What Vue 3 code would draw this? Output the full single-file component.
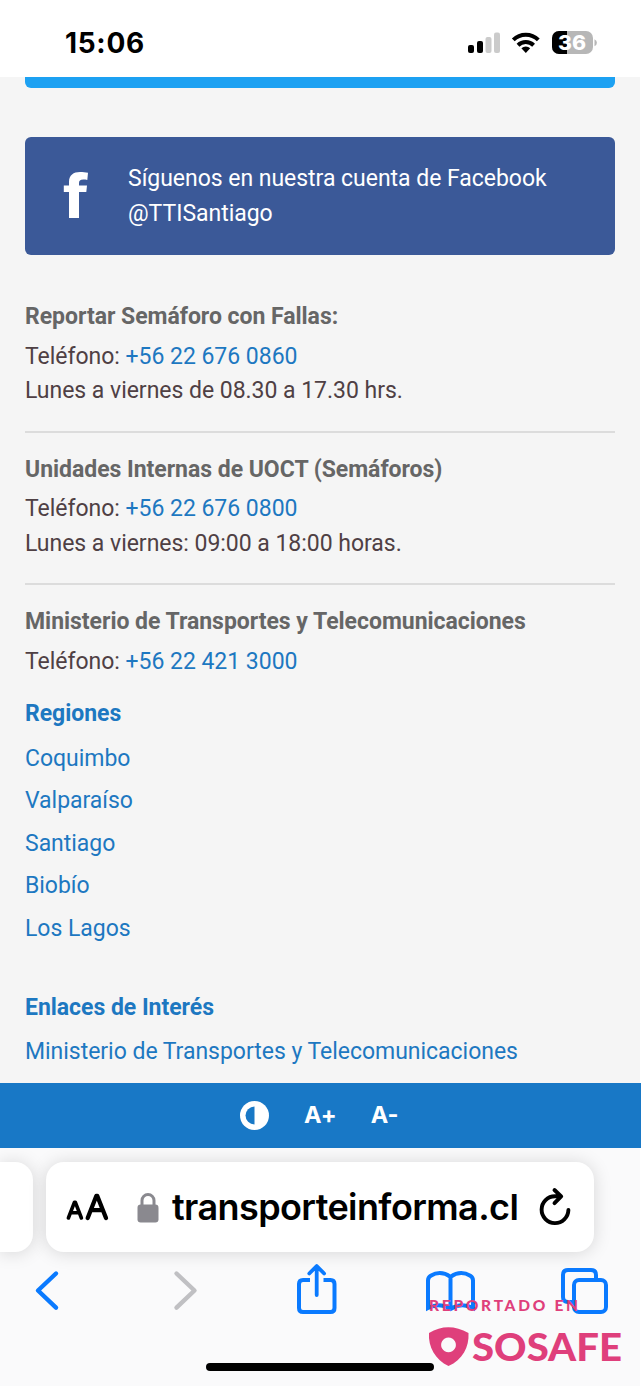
<script setup>
const contacts = [
  { title: 'Reportar Semáforo con Fallas:', phone: '+56 22 676 0860', hours: 'Lunes a viernes de 08.30 a 17.30 hrs.' },
  { title: 'Unidades Internas de UOCT (Semáforos)', phone: '+56 22 676 0800', hours: 'Lunes a viernes: 09:00 a 18:00 horas.' },
  { title: 'Ministerio de Transportes y Telecomunicaciones', phone: '+56 22 421 3000' },
]
const regions = ['Coquimbo', 'Valparaíso', 'Santiago', 'Biobío', 'Los Lagos']
</script>

<template>
  <div class="screen">
    <header class="status">
      <span class="time">15:06</span>
      <svg class="indicators" width="130" height="26" viewBox="0 0 130 26">
        <rect x="0" y="15" width="6" height="8" rx="2" />
        <rect x="9" y="11" width="6" height="12" rx="2" />
        <rect x="17.500" y="7" width="6" height="16" rx="2" fill="#cbcbcb" />
        <rect x="26" y="2.500" width="6" height="20.500" rx="2" fill="#cbcbcb" />
        <g fill="none" stroke="#000" stroke-width="4">
          <path d="M45.300 9.800a17.800 17.800 0 0 1 25 0" />
          <path d="M50 15.200a11.200 11.200 0 0 1 15.600 0" />
        </g>
        <path d="M53.400 18.200a6.300 6.300 0 0 1 8.800 0l-4.400 4.800z" />
        <clipPath id="cell"><rect x="84" y="1" width="41" height="23" rx="7" /></clipPath>
        <g clip-path="url(#cell)">
          <rect x="84" y="1" width="41" height="23" fill="#b7b7b7" />
          <rect x="84" y="1" width="15" height="23" />
        </g>
        <path d="M126.500 9.200q2.400 1 2.400 3.500t-2.400 3.500z" fill="#b7b7b7" />
        <text x="90" y="19.700" textLength="28" lengthAdjust="spacingAndGlyphs" class="charge">36</text>
      </svg>
    </header>

    <main class="page">
      <div class="twitter"></div>
      <a class="facebook">
        <svg width="27" height="48" viewBox="0 0 27 48" fill="#fff">
          <path d="M6 46V20H.8v-6.500H6V10C6 3.200 10.500 0 17 0c3 0 5.300.2 8 .7l-.7 7.200c-1.400-.3-2.500-.4-4-.4-3.200 0-4.300 1.200-4.300 3.500v2.500h8l-.7 6.500H16V46z" />
        </svg>
        <p>Síguenos en nuestra cuenta de Facebook<br />@TTISantiago</p>
      </a>

      <section class="contacts">
        <article v-for="c in contacts" :key="c.title">
          <h3>{{ c.title }}</h3>
          <p>Teléfono: <a>{{ c.phone }}</a></p>
          <p v-if="c.hours">{{ c.hours }}</p>
        </article>
      </section>

      <nav class="links">
        <h4>Regiones</h4>
        <a v-for="r in regions" :key="r">{{ r }}</a>
      </nav>
      <nav class="links more">
        <h4>Enlaces de Interés</h4>
        <a>Ministerio de Transportes y Telecomunicaciones</a>
      </nav>
    </main>

    <div class="access">
      <svg width="29" height="29" viewBox="0 0 29 29">
        <circle cx="14.500" cy="14.500" r="14.500" fill="#fff" />
        <path d="M14.500 5.500a9 9 0 0 0 0 18z" fill="#1878c6" />
      </svg>
      <b>A+</b>
      <b>A-</b>
    </div>

    <footer class="browser">
      <div class="tabs">
        <div class="prev"></div>
        <div class="address">
          <svg class="aa" width="44" height="30" viewBox="0 0 44 30" fill="none" stroke="#000" stroke-linecap="round" stroke-linejoin="round">
            <path d="M2.400 26 8.500 10.200h.8L15.400 26M4.600 20.800h8.600" stroke-width="3.600" />
            <path d="M21.700 26 30.400 3.800h.8L40 26M25 18.200h11.800" stroke-width="4.300" />
          </svg>
          <svg class="lock" width="22" height="31" viewBox="0 0 22 31">
            <path d="M5 14V8.500a6 6 0 0 1 12 0V14" fill="none" stroke="#8a898f" stroke-width="3" />
            <rect x=".5" y="12.500" width="21" height="18" rx="3.200" fill="#8a898f" />
          </svg>
          <span class="host">transporteinforma.cl</span>
          <svg class="reload" width="34" height="40" viewBox="0 0 34 40" fill="none" stroke="#000" stroke-width="3.900" stroke-linecap="round" stroke-linejoin="round">
            <path d="M18.500 9.300H17A13.400 13.400 0 1 0 30.400 23M16.500 3l6.700 6.300-6.700 6.800" />
          </svg>
        </div>
      </div>

      <svg class="tools" width="641" height="70" viewBox="0 1256 641 70" fill="none" stroke="#0a7aff" stroke-width="4" stroke-linecap="round" stroke-linejoin="round">
        <path d="M56 1273.500 38 1290.500l18 17.200" stroke-width="4.400" />
        <path d="m176.500 1273.500 18 17-18 17.200" stroke="#c0c0c3" stroke-width="4.400" />
        <path d="M310 1280h-7q-4 0-4 4v24q0 4 4 4h27.500q4 0 4-4v-24q0-4-4-4h-7" stroke-linecap="butt" />
        <path d="M316.700 1295v-28M309.300 1273.500l7.400-7.500 7.400 7.500" stroke-width="3.800" />
        <path d="M428 1308v-27.500q0-3 2.700-4.700 9.800-6 19.800 1 10-7 19.800-1 2.700 1.700 2.700 4.700V1308q-11.500-6-22.500 1-11-7-22.500-1zM450.500 1277v31" stroke-linejoin="miter" />
        <path d="M572 1302h-4q-5 0-5-5v-22q0-5 5-5h23q5 0 5 5v4" stroke-linecap="butt" />
        <rect x="574" y="1280" width="32" height="32" rx="5" />
      </svg>
      <div class="home"></div>

      <svg class="badge" width="200" height="76" viewBox="425 1294 200 76" fill="#df3f7b">
        <text x="429" y="1311" textLength="149" class="caption">REPORTADO EN</text>
        <path fill-rule="evenodd" d="M429 1333q19-11.500 39.500 0c.8 14-6 27-20 33-13-6-20.500-19-19.500-33zm19.500 4.500a7.400 7.400 0 1 0 .01 0z" />
        <text x="472" y="1361" textLength="150" lengthAdjust="spacingAndGlyphs" class="brand">SOSAFE</text>
      </svg>
    </footer>
  </div>
</template>

<style>
body { margin: 0; background: #fff; }
</style>

<style scoped>
* { box-sizing: border-box; margin: 0; }
.screen { width: 641px; height: 1386px; overflow: hidden; display: flex; flex-direction: column; background: #fff; font: 23px/34.5px Roboto, sans-serif; letter-spacing: -0.03px; color: #4f4044; }
.status { height: 77px; flex: none; display: flex; justify-content: space-between; align-items: center; padding: 9px 43px 0 65px; }
.time { font: 700 28px/30px Inter, sans-serif; letter-spacing: 0.7px; color: #000; }
.charge { font: 800 20px Inter, sans-serif; fill: #fff; letter-spacing: 0; }
.page { height: 1006px; flex: none; width: 640px; background: #f5f5f5; padding: 0 25px; }
.twitter { height: 11px; background: #1da1f2; border-radius: 0 0 6px 6px; }
.facebook { margin-top: 49px; height: 118px; display: flex; align-items: center; background: #3b5998; border-radius: 6px; padding-left: 38px; color: #fff; }
.facebook p { margin-left: 38px; padding-top: 1px; }
.contacts { margin-top: 45px; }
.contacts article { height: 152.5px; }
.contacts article + article { border-top: 2px solid #dcdcdc; padding-top: 20px; }
.contacts article:first-child { height: 130.5px; }
.contacts article:last-child { height: 114px; }
.contacts h3 { font-size: 23px; font-weight: 700; color: #666; line-height: 34.5px; margin-bottom: 5px; }
.contacts a, .links { color: #1d78c1; }
.links { display: flex; flex-direction: column; }
.links h4 { font-size: 23px; font-weight: 700; line-height: 34.5px; margin-bottom: 6px; }
.links a { line-height: 42.6px; }
.more { margin-top: 40.5px; }
.access { height: 65px; flex: none; background: #1878c6; display: flex; align-items: center; padding-left: 240px; color: #fff; }
.access b { font: 700 23.5px/34px Inter, sans-serif; margin: -2px 0 0 35px; }
.access b + b { margin-left: 34px; }
.browser { position: relative; flex: 1; width: 640px; background: #fafafb; }
.tabs { display: flex; gap: 13px; padding-top: 14px; height: 108px; }
.prev { width: 33px; height: 90px; background: #fff; border-radius: 0 18px 18px 0; box-shadow: 0 1px 18px #00000026; }
.address { width: 548px; height: 90px; background: #fff; border-radius: 18px; box-shadow: 0 1px 18px #00000026; display: flex; align-items: center; padding-left: 20px; }
.lock { margin-left: 27px; }
.host { font: 600 36px/44px Inter, sans-serif; color: #000; margin-left: 13px; width: 348px; letter-spacing: -0.6px; white-space: nowrap; }
.reload { margin-left: 18px; }
.tools { display: block; }
.home { width: 228px; height: 8px; border-radius: 4px; background: #000; margin: 37px 0 0 206px; }
.badge { position: absolute; left: 425px; top: 146px; letter-spacing: 0; }
.caption { font: 900 15.500px Lato, sans-serif; }
.brand { font: 900 37.500px Lato, sans-serif; }
</style>
